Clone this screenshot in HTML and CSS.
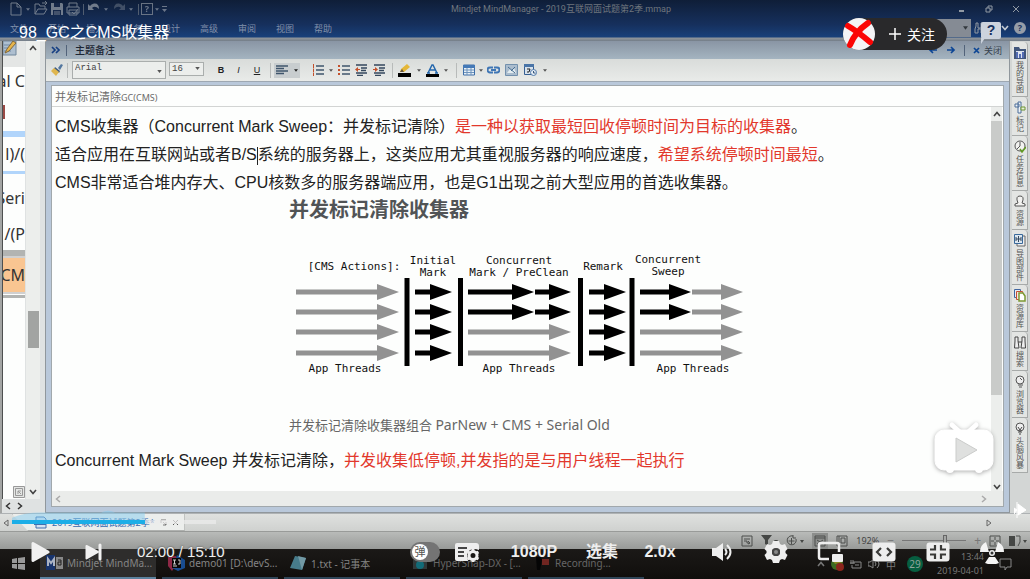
FILE: index.html
```html
<!DOCTYPE html>
<html lang="zh-CN">
<head>
<meta charset="utf-8">
<title>98_GC之CMS收集器</title>
<link rel="stylesheet" href="styles.css">
</head>
<body>
<svg class="defs" aria-hidden="true">
  <defs>
    <symbol id="caret" viewBox="0 0 6 4"><path d="M0 0h6L3 4z" fill="currentColor"/></symbol>
    <symbol id="up" viewBox="0 0 8 6"><path d="M1 5l3-3.500 3 3.500" fill="none" stroke="currentColor" stroke-width="1.600"/></symbol>
    <symbol id="down" viewBox="0 0 8 6"><path d="M1 1l3 3.500L7 1" fill="none" stroke="currentColor" stroke-width="1.600"/></symbol>
    <symbol id="left" viewBox="0 0 6 8"><path d="M5 1L1.500 4 5 7" fill="none" stroke="currentColor" stroke-width="1.500"/></symbol>
    <symbol id="right" viewBox="0 0 6 8"><path d="M1 1l3.500 3L1 7" fill="none" stroke="currentColor" stroke-width="1.500"/></symbol>
  </defs>
</svg>
<div class="player">
  <div class="desktop">
    <header class="app-head">
      <div class="title-row">
        <div class="quick">
          <svg width="16" height="16" viewBox="0 0 16 16"><path d="M3 2h6l4 4v8H3zM9 2v4h4" class="ln"/></svg>
          <svg class="cr" width="4" height="3"><use href="#caret"/></svg>
          <svg width="16" height="16" viewBox="0 0 16 16"><path d="M2 13V3h4l1 2h5v3M2 13l3-5h9l-3 5zM9 2h5M12 0l2 2-2 2" class="ln"/></svg>
          <svg width="16" height="16" viewBox="0 0 16 16"><path d="M2 2h11l1 1v11H2z" fill="#9199a3"/><path d="M5 2h6v4H5zM4 9h8v5H4z" fill="#18294a"/><path d="M5 11h6M5 13h6" class="ln"/></svg>
          <svg width="16" height="16" viewBox="0 0 16 16"><path d="M4 6V2h8v4M2 6h12v6H2zM4 9h8v5H4zM7 11l2 2 4-5" class="ln"/></svg>
          <i class="bar"></i>
          <svg width="16" height="16" viewBox="0 0 16 16"><path d="M2 3v6h6L6 7q3-3 7 1 0-6-5-5.500Q5 3 4 5z" fill="#9199a3"/></svg>
          <svg class="cr" width="4" height="3"><use href="#caret"/></svg>
          <svg class="dim" width="16" height="16" viewBox="0 0 16 16"><path d="M14 3v6H8l2-2q-3-3-7 1 0-6 5-5.500Q11 3 12 5z" fill="#9199a3"/></svg>
          <svg class="cr" width="4" height="3"><use href="#caret"/></svg>
          <i class="bar"></i>
          <span class="qbox">?</span>
          <svg class="cr" width="4" height="3"><use href="#caret"/></svg>
          <svg width="5" height="6" viewBox="0 0 5 6"><path d="M0 0h5v1H0zM0 3h5L2.500 6z" fill="currentColor"/></svg>
        </div>
        <div class="app-title">Mindjet MindManager - 2019互联网面试题第2季.mmap</div>
        <div class="win">
          <svg width="8" height="8" viewBox="0 0 8 8"><path d="M1 6h5" class="ln w2"/></svg>
          <svg width="8" height="8" viewBox="0 0 8 8"><path d="M1 3h4v4H1zM3 3V1h4v4H5" class="ln"/></svg>
          <svg width="8" height="8" viewBox="0 0 8 8"><path d="M1 1l6 6M7 1L1 7" class="ln"/></svg>
        </div>
      </div>
      <nav class="menu-row">
        <a href="#">文件</a><a href="#">开始</a><a href="#">插入</a><a href="#">任务</a><a href="#">设计</a><a href="#">高级</a><a href="#">审阅</a><a href="#">视图</a><a href="#">帮助</a>
        <span class="search"><svg width="5" height="4"><use href="#caret"/></svg></span>
        <svg class="find" width="11" height="12" viewBox="0 0 11 12"><path d="M2 1v3L1 7v4h3V7h3v4h3V7L9 4V1H7v5H4V1z" class="ln"/></svg>
        <svg class="mcar" width="8" height="6"><use href="#down"/></svg>
        <span class="help">?</span>
      </nav>
    </header>

    <main class="work">
      <aside class="map">
        <div class="canvas">
          <div class="m-icon"><svg width="14" height="15" viewBox="0 0 14 15"><path d="M0 0h13v14H0z" fill="#aebfd0" stroke="#71869c"/><path d="M1 4h9M1 7h8M1 10h7" stroke="#6e87a3"/><path d="M2 12L4 8l6-8 3 2-7 8z" fill="#e7b54a" stroke="#80673a"/></svg></div>
          <div class="m-text">al C</div>
          <div class="m-mark"></div>
          <div class="m-blue"></div>
          <div class="m-text tall">l)/(</div>
          <div class="m-thin"></div>
          <div class="m-text open">Seri</div>
          <div class="m-text low">/(P</div>
          <div class="m-grey"></div>
          <div class="m-hot">CM</div>
          <div class="m-edge"></div>
          <div class="m-foot"><svg width="12" height="12" viewBox="0 0 12 12"><path d="M.5.5h11v11H.5z" fill="#e4e6e4" stroke="#999"/><path d="M2.500 2.500h7v7h-7zM5 8V5h3M5 5l3 3" fill="none" stroke="#999"/></svg></div>
        </div>
        <div class="vbar">
          <svg width="8" height="6"><use href="#up"/></svg>
          <span class="thumb"></span>
          <svg width="8" height="6"><use href="#down"/></svg>
        </div>
        <div class="hbar"><svg width="6" height="8"><use href="#left"/></svg><svg width="6" height="8"><use href="#right"/></svg></div>
      </aside>

      <section class="notes">
        <div class="notes-head">
          <svg width="10" height="8" viewBox="0 0 10 8"><path d="M1 1l3 3-3 3M5 1l3 3-3 3" fill="none" stroke="#163f83" stroke-width="1.700"/></svg>
          <i class="bar"></i>
          <h2>主题备注</h2>
          <div class="nav">
            <svg width="10" height="8" viewBox="0 0 10 8"><path d="M9 4H2M5 1L2 4l3 3" fill="none" stroke="#0d4695" stroke-width="1.700"/></svg>
            <svg width="10" height="8" viewBox="0 0 10 8"><path d="M1 4h7M5 1l3 3-3 3" fill="none" stroke="#0d4695" stroke-width="1.700"/></svg>
            <i class="bar"></i>
            <button type="button" class="close"><svg width="7" height="7" viewBox="0 0 7 7"><path d="M1 1l5 5M6 1L1 6" stroke="#0d4695" stroke-width="1.700"/></svg>关闭</button>
          </div>
        </div>
        <div class="tools">
          <svg width="12" height="12" viewBox="0 0 12 12"><path d="M7 4l3-4 2 1-3 5z" fill="#53779f"/><path d="M4 3l5 4-1 2-5-4z" fill="#3f5c80"/><path d="M3 4l5 4-3 4-5-5z" fill="#dfb64f"/></svg>
          <i class="bar"></i>
          <label class="pick"><select aria-label="字体"><option>Arial</option></select><svg width="5" height="3"><use href="#caret"/></svg></label>
          <label class="pick small"><select aria-label="字号"><option>16</option></select><svg width="5" height="3"><use href="#caret"/></svg></label>
          <span></span>
          <button type="button"><b>B</b></button>
          <button type="button"><em>I</em></button>
          <button type="button"><u>U</u></button>
          <i class="bar"></i>
          <button type="button" class="on" aria-label="对齐"><svg width="12" height="10" viewBox="0 0 12 10"><path d="M0 1h12M0 3.500h8M0 6h12M0 8.500h8" stroke="#3f556c" stroke-width="1.300"/></svg><svg width="4" height="3"><use href="#caret"/></svg></button>
          <span></span>
          <svg width="12" height="12" viewBox="0 0 12 12"><path d="M4 2h8M4 6h8M4 10h8" stroke="#3f556c" stroke-width="1.500"/><path d="M1.500 0v4M1.500 4.500v3.500M1.500 8.500V12" stroke="#c3502b"/></svg>
          <svg class="cr" width="4" height="3"><use href="#caret"/></svg>
          <svg width="12" height="12" viewBox="0 0 12 12"><path d="M4 2h8M4 6h8M4 10h8" stroke="#3f556c" stroke-width="1.500"/><path d="M0 1h2v2H0zM0 5h2v2H0zM0 9h2v2H0z" fill="#c3502b"/></svg>
          <svg class="cr" width="12" height="12" viewBox="0 0 12 12"><path d="M1 1h11M6 4h6M6 6.500h5M1 9h11M2 11.500h6" stroke="#34475d" stroke-width="1.300"/><path d="M0 5.500L3 3v2h2v1H3v2z" fill="#c3502b"/></svg>
          <svg class="cr" width="12" height="12" viewBox="0 0 12 12"><path d="M1 1h11M6 4h6M6 6.500h5M1 9h11M2 11.500h6" stroke="#34475d" stroke-width="1.300"/><path d="M5 5.500L2 3v2H0v1h2v2z" fill="#c3502b"/></svg>
          <i class="bar"></i>
          <svg width="13" height="13" viewBox="0 0 13 13"><path d="M0 9h13v4H0z"/><path d="M2 8l1-3 6-5 3 3-6 5z" fill="#e5b738"/><path d="M2 8l2-3 2 3z" fill="#65553f"/></svg>
          <svg class="cr" width="4" height="3"><use href="#caret"/></svg>
          <svg width="13" height="13" viewBox="0 0 13 13"><path d="M0 10h13v3H0z"/><path d="M2 9l4-8h1l4 8M4 6h5M1 9h3M9 9h3" fill="none" stroke="#2467ad" stroke-width="1.500"/></svg>
          <svg class="cr" width="4" height="3"><use href="#caret"/></svg>
          <i class="bar"></i>
          <svg width="12" height="12" viewBox="0 0 12 12"><path d="M.5 1h11v10H.5z" fill="#e8f0f6" stroke="#3e6fa9"/><path d="M0 1h12v3H0z" fill="#4479b7"/><path d="M1 6h10M1 8.500h10M4 4v7M8 4v7" stroke="#6f94bd"/></svg>
          <svg class="cr" width="4" height="3"><use href="#caret"/></svg>
          <svg class="cr" width="13" height="8" viewBox="0 0 13 8"><path d="M6 1.500H3a2.500 2.500 0 000 5h3M7 1.500h3a2.500 2.500 0 010 5H7M4 4h5" fill="none" stroke="#3f76b5" stroke-width="2"/></svg>
          <svg class="cr" width="13" height="12" viewBox="0 0 13 12"><path d="M.5.5h12v11H.5z" fill="#aabccd" stroke="#7290ad"/><path d="M2 9l3-4 2 2 2-3 2 5z" fill="#e4edf1"/><path d="M3 3l7 6M10 3L6 7" stroke="#476d91"/></svg>
          <svg class="cr" width="13" height="12" viewBox="0 0 13 12"><path d="M.5.5h9v10h-9z" fill="#d7e2ec" stroke="#365f92"/><path d="M0 0h10v3H0z" fill="#4a75a7"/><path d="M3 5h3L5 8H3" fill="none" stroke="#222"/><circle cx="9.500" cy="8.500" r="3" fill="#e5edf5" stroke="#527bac"/><path d="M9.500 7v2h2" fill="none" stroke="#36567a"/></svg>
          <svg class="cr" width="4" height="3"><use href="#caret"/></svg>
        </div>
        <div class="doc">
          <div class="doc-title">并发标记清除<span>GC(CMS)</span></div>
          <div class="doc-main">
            <article class="doc-text">
              <p>CMS收集器（Concurrent Mark Sweep：并发标记清除）<em>是一种以获取最短回收停顿时间为目标的收集器</em>。</p>
              <p>适合应用在互联网站或者B/S<span class="text-caret"></span>系统的服务器上，这类应用尤其重视服务器的响应速度，<em>希望系统停顿时间最短</em>。</p>
              <p>CMS非常适合堆内存大、CPU核数多的服务器端应用，也是G1出现之前大型应用的首选收集器。</p>
              <figure>
                <h3>并发标记清除收集器</h3>
                <svg class="diagram" width="460" height="130" viewBox="289 250 460 130">
                  <defs>
                    <marker id="hk" markerUnits="userSpaceOnUse" markerWidth="22" markerHeight="16" refX="0" refY="8" orient="auto"><path d="M0 0l22 8-22 8z"/></marker>
                    <marker id="hg" markerUnits="userSpaceOnUse" markerWidth="22" markerHeight="16" refX="0" refY="8" orient="auto"><path d="M0 0l22 8-22 8z" fill="#929292"/></marker>
                  </defs>
                  <g class="thread grey">
                    <path d="M296 292H377"/><path d="M296 312H377"/><path d="M296 332H377"/><path d="M296 353H377"/>
                    <path d="M468 332H549"/><path d="M468 353H549"/>
                    <path d="M692 292H721"/><path d="M692 312H721"/><path d="M640 332H721"/><path d="M640 353H721"/>
                  </g>
                  <g class="thread">
                    <path d="M415 292H430"/><path d="M415 312H430"/><path d="M415 332H430"/><path d="M415 353H430"/>
                    <path d="M468 292H512"/><path d="M468 312H512"/><path d="M535 292H549"/><path d="M535 312H549"/>
                    <path d="M589 292H604"/><path d="M589 312H604"/><path d="M589 332H604"/><path d="M589 353H604"/>
                    <path d="M640 292H669"/><path d="M640 312H669"/>
                  </g>
                  <path d="M404.500 278h5v88h-5zM458 278h5v88h-5zM578 278h5v88h-5zM629.500 278h5v88h-5z"/>
                  <g class="lab">
                    <text x="354" y="270">[CMS Actions]:</text>
                    <text x="433" y="264">Initial</text><text x="433" y="276">Mark</text>
                    <text x="519" y="264">Concurrent</text><text x="519" y="276">Mark / PreClean</text>
                    <text x="603" y="270">Remark</text>
                    <text x="668" y="263">Concurrent</text><text x="668" y="275">Sweep</text>
                    <text x="345" y="372">App Threads</text><text x="519" y="372">App Threads</text><text x="693" y="372">App Threads</text>
                  </g>
                </svg>
                <figcaption>并发标记清除收集器组合 <span>ParNew + CMS + Serial Old</span></figcaption>
              </figure>
              <p>Concurrent Mark Sweep 并发标记清除，<em>并发收集低停顿,并发指的是与用户线程一起执行</em></p>
            </article>
            <div class="doc-scroll">
              <svg width="8" height="6"><use href="#up"/></svg>
              <span class="thumb"></span>
              <svg width="8" height="6"><use href="#down"/></svg>
            </div>
          </div>
          <div class="doc-hscroll"><svg width="6" height="8"><use href="#left"/></svg><svg width="6" height="8"><use href="#right"/></svg></div>
        </div>
      </section>

      <aside class="side">
        <button type="button"><svg width="12" height="13" viewBox="0 0 12 13"><path d="M0 1h5l1 2h6v10H0z" fill="#41567c"/><path d="M2 5h8v7H2z" fill="#dce3ee"/><path d="M3 6v6M6 8v4M9 6v6" stroke="#2746a0" stroke-width="1.500"/></svg>我的导图</button>
        <button type="button"><svg width="12" height="13" viewBox="0 0 12 13"><path d="M4 1h3v11H4zM1 3h4v3H1z" fill="#eef3f7" stroke="#4a6d99"/><path d="M7 6h4v3H7z" fill="#e7f0d6" stroke="#6c9434"/></svg>标记</button>
        <button type="button"><svg width="12" height="13" viewBox="0 0 12 13"><circle cx="6" cy="6" r="5" fill="#f2f2f0" stroke="#555"/><path d="M6 2v4L3 9" fill="none" stroke="#555"/><path d="M6 9l2 3 4-5" fill="none" stroke="#619c21" stroke-width="1.500"/></svg>任务信息</button>
        <button type="button"><svg width="12" height="13" viewBox="0 0 12 13"><path d="M4 8Q1 1 6 1t2 7l3 1v2H1V9z" fill="#f2f2f0" stroke="#555"/></svg>资源</button>
        <button type="button"><svg width="12" height="13" viewBox="0 0 12 13"><path d="M3 2h8v10H3z" fill="#eee" stroke="#666"/><path d="M.5.5h8v9h-8z" fill="#dce7f0" stroke="#39699a"/><path d="M2 5h5M4.500 2v6M2 3v4M7 3v4" stroke="#34495e"/></svg>导图部件</button>
        <button type="button"><svg width="12" height="13" viewBox="0 0 12 13"><path d="M.5.5h6v8h-6z" fill="#e8edf5" stroke="#4066a0"/><path d="M2.500 2.500h6v8h-6z" fill="#f7e5df" stroke="#c35034"/><path d="M5 4h4l2 3v5H5z" fill="#fff" stroke="#7c9933" stroke-width="1.500"/></svg>资源库</button>
        <button type="button"><svg width="12" height="13" viewBox="0 0 12 13"><path d="M1 1h3v4l1 7H.5L1 5zM8 1h3v4l.5 7H7l1-7zM4 6h4" fill="#eee" stroke="#444"/></svg>搜索</button>
        <button type="button"><svg width="12" height="13" viewBox="0 0 12 13"><circle cx="6" cy="5" r="4" fill="#eee" stroke="#555"/><path d="M4 10h5M5 12h3M6 3l2 2" stroke="#555"/></svg>浏览器</button>
        <button type="button"><svg width="12" height="13" viewBox="0 0 12 13"><circle cx="6" cy="5" r="4" fill="#eee" stroke="#555"/><path d="M4 10h4M5 12h2M4 5l2 3 2-3M6 8v2" fill="none" stroke="#444"/></svg>头脑风暴</button>
      </aside>
    </main>

    <div class="doc-tabs">
      <svg class="tri" width="6" height="8" viewBox="0 0 6 8"><path d="M5 1v6L1 4z" fill="none" stroke="#666"/></svg>
      <div class="doc-tab">
        <svg width="13" height="13" viewBox="0 0 13 13"><path d="M2 1h8l2 2v9H2z" fill="#d5e2f0" stroke="#416fae"/><path d="M0 4h12v5H0z" fill="#416fae"/><path d="M2 8V5l2 2 2-2v3M8 5v3M10 5v3" fill="none" stroke="#fff"/></svg>
        <span>2019互联网面试题第2季*</span>
        <svg width="7" height="7" viewBox="0 0 7 7"><path d="M1 4V1h5M3 3l3 3M6 3v3H3" fill="none" stroke="#777"/></svg>
        <svg width="7" height="7" viewBox="0 0 7 7"><path d="M1 1l5 5M6 1L1 6" stroke="#555"/></svg>
      </div>
      <svg class="tri end" width="6" height="8" viewBox="0 0 6 8"><path d="M1 1v6l4-3z" fill="none" stroke="#666"/></svg>
    </div>
    <div class="status">
      <svg width="12" height="12" viewBox="0 0 12 12"><path d="M1 1h10v10H1zM3 4h6M3 6h3v2h3M7 9l2-1-2-2" class="dk"/></svg>
      <svg width="17" height="12" viewBox="0 0 17 12"><path d="M0 0h11L7 5v6L4 9V5zM13 5h4l-2 3z" fill="#454745"/></svg>
      <svg width="18" height="12" viewBox="0 0 18 12"><path d="M10 4a4.500 4.500 0 11-3-3M5.500 3v6M2.500 6h6M7 0v3h3" class="dk"/><path d="M14 5h4l-2 3z" fill="#454745"/></svg>
      <span class="st-on"><svg width="12" height="12" viewBox="0 0 12 12"><path d="M1 1h10v10H1zM1 3h10M3 5l6 4M9 5L3 9" class="dk"/></svg></span>
      <svg width="12" height="12" viewBox="0 0 12 12"><path d="M1 1h10v10H1zM3 1v10M5 3h4v5H5z" class="dk"/></svg>
      <span class="pct">192%</span>
      <span class="sign">−</span>
      <input class="zoom" type="range" min="0" max="100" value="68" aria-label="缩放">
      <span class="sign">+</span>
      <svg width="12" height="12" viewBox="0 0 12 12"><path d="M1 1h10v10H1zM6 2v3M6 7v3M2 6h3M7 6h3" class="dk"/></svg>
      <svg width="18" height="12" viewBox="0 0 18 12"><path d="M0 1h6v10H0z" fill="#454745"/><path d="M7 1h4v6l-2 4" class="dk"/><path d="M14 5h4l-2 3z" fill="#454745"/></svg>
    </div>

    <footer class="taskbar">
      <svg class="start" width="14" height="14" viewBox="0 0 14 14"><path d="M0 2l5-1v5H0zM6 1l7-1v6H6zM0 7h5v5l-5-1zM6 7h7v6l-7-1z" fill="#999"/></svg>
      <div class="task on"><svg width="17" height="16" viewBox="0 0 17 16"><path d="M0 0h9v15H0z" fill="#18346c"/><path d="M2 11V4l3 4 3-4v7" fill="none" stroke="#aab3c4" stroke-width="2"/><path d="M10 2h7v12h-7z" fill="#888"/><path d="M12 5h3v2h-3v3h3V7" fill="none" stroke="#222"/></svg>Mindjet MindMa...</div>
      <div class="task"><svg width="17" height="16" viewBox="0 0 17 16"><path d="M0 2l8-1 2 6-6 9-4-5z" fill="#8e2846"/><path d="M9 0l8 5v8l-7 3-6-3z" fill="#184c91"/><path d="M4 3h9v10H4z" fill="#080808"/><path d="M5 5h3M6.500 5v4M5 9h3M10 5h2v4h-2M5 11h4" fill="none" stroke="#ccc"/></svg>demo01 [D:\devS...</div>
      <div class="task"><svg width="17" height="16" viewBox="0 0 17 16"><path d="M5 1l11 2-4 12L0 13z" fill="#477c8b"/><path d="M8 1l8 2-4 12z" fill="#7299a4"/></svg>1.txt - 记事本</div>
      <div class="task dimmed"><svg width="17" height="16" viewBox="0 0 17 16"><path d="M1 5h3l2-2h5l2 2h2v9H1z" fill="#30393a"/><circle cx="8" cy="10" r="4" fill="#126b78"/></svg>HyperSnap-DX - [...</div>
      <div class="task dimmed"><svg width="17" height="16" viewBox="0 0 17 16"><path d="M2 2h5l1 3-2 10H3z" fill="#050505"/><path d="M8 4h7v6H8z" fill="#712621"/></svg>Recording...</div>
      <div class="tray">
        <svg width="8" height="6"><use href="#up"/></svg>
        <svg width="13" height="13" viewBox="0 0 13 13"><circle cx="6" cy="6" r="6" fill="#3c6b22"/><path d="M1 2l8-2 3 4-8 2z" fill="#888622"/><circle cx="9" cy="9" r="4" fill="#8b251c"/></svg>
        <svg width="12" height="9" viewBox="0 0 12 9"><path d="M3 2h8v6H2V5M1 0v4M3 0v4M0 3h5M6 4v2M8 4v2" class="ty"/></svg>
        <svg width="12" height="10" viewBox="0 0 12 10"><path d="M0 3h2l3-2v8L2 7H0zM7 3q2 2 0 4M9 1q4 4 0 8" class="ty"/></svg>
        <span>中</span>
        <span class="temp">29</span>
        <time>13:44<br>2019-04-01</time>
        <svg width="13" height="13" viewBox="0 0 13 13"><path d="M1 1h11v8H8L6 12V9H1z" class="ty"/></svg>
      </div>
    </footer>
  </div>

  <h1 class="video-title">98_GC之CMS收集器</h1>
  <div class="follow">
    <svg width="32" height="32" viewBox="0 0 32 32"><circle cx="16" cy="16" r="16" fill="#f4f4f6"/><path d="M5 8q9 5 22 16M25 5Q12 14 7 27" fill="none" stroke="#fb0505" stroke-width="6" stroke-linecap="round"/></svg>
    <button type="button"><svg width="12" height="12" viewBox="0 0 12 12"><path d="M6 0v12M0 6h12" stroke="#fff" stroke-width="1.500"/></svg>关注</button>
  </div>
  <span class="ask">?</span>
  <svg class="tv" width="68" height="62" viewBox="0 0 68 62"><g fill="#fff" stroke="#fff"><path d="M22 5l10 9M46 5L36 14" stroke-width="5" stroke-linecap="round"/><rect x="5" y="10" width="58" height="40" rx="9"/><path d="M17 49a3 3 0 006 0M46 49a3 3 0 006 0" stroke-width="2"/></g><path d="M26 18v24l21-12z" fill="#dfe0df" stroke="#cbcccb"/></svg>
  <svg class="spark" width="12" height="16" viewBox="0 0 12 16"><path d="M3 0v16M4 2l8 6-8 5zM0 6l3 2-3 4" fill="#fff" stroke="#fff"/></svg>

  <div class="progress">
    <svg class="heat" viewBox="0 0 134 14" preserveAspectRatio="none"><path d="M0 14V9Q12 3 30 3H90Q97-1 104 3H134v11z" fill="#82c9ed" fill-opacity=".5"/></svg>
    <div class="rail"><div class="buffered"></div><div class="played"></div></div>
  </div>
  <div class="controls">
    <div class="c-left">
      <button type="button" aria-label="播放"><svg width="19" height="22" viewBox="0 0 19 22"><path d="M2 2.500v17L17 11z" fill="#f1f1f1" stroke="#f1f1f1" stroke-width="3" stroke-linejoin="round"/></svg></button>
      <button type="button" aria-label="下一个"><svg width="17" height="18" viewBox="0 0 17 18"><path d="M1.500 3v12.500L13 9z" fill="#f1f1f1" stroke="#f1f1f1" stroke-width="2" stroke-linejoin="round"/><path d="M15 2v14" stroke="#f1f1f1" stroke-width="3" stroke-linecap="round"/></svg></button>
      <span class="time">02:00 / 15:10</span>
    </div>
    <div class="c-right">
      <label class="danmaku"><input type="checkbox" aria-label="弹幕"><span>弹</span></label>
      <button type="button" aria-label="弹幕设置"><svg width="26" height="20" viewBox="0 0 26 20"><path d="M3 1h19q3 0 3 3v4q-9-3-12 4l1 7H3q-2 0-2-2V3q0-2 2-2z" fill="#eee"/><path d="M4 6h9M4 10h6M4 14h6" stroke="#454545" stroke-width="2"/><circle cx="19" cy="13.500" r="4" fill="none" stroke="#eee" stroke-width="3"/><path d="M19 7v2M19 18v2M13.500 10l2 1M22.500 16l2 1M13.500 17l2-1M22.500 11l2-1" stroke="#eee" stroke-width="3"/></svg></button>
      <button type="button">1080P</button>
      <button type="button">选集</button>
      <button type="button">2.0x</button>
      <button type="button" aria-label="音量"><svg width="22" height="20" viewBox="0 0 22 20"><path d="M1 6h4l7-5v18l-7-5H1z" fill="#eee"/><path d="M14 7q3 3 0 6M16 3q7 7 0 14" fill="none" stroke="#eee" stroke-width="2"/></svg></button>
      <button type="button" aria-label="设置"><svg width="24" height="24" viewBox="0 0 24 24"><path fill-rule="evenodd" d="M9 1h6l1 3 2 1 3-1 2.500 5-2 2v2l2 2-2.500 5-3-1-2 1-1 3H9l-1-3-2-1-3 1-2.500-5 2-2v-2l-2-2L3 4l3 1 2-1zM12 8a4 4 0 100 8 4 4 0 000-8z" fill="#eee"/><circle cx="12" cy="12" r="4" fill="#444"/><circle cx="12" cy="12" r="2" fill="#888"/></svg></button>
      <button type="button" aria-label="画中画"><svg width="26" height="22" viewBox="0 0 26 22"><path d="M12 18H4q-2 0-2-2V4q0-2 2-2h16q2 0 2 2v7" fill="none" stroke="#eee" stroke-width="2.500"/><rect x="15" y="13" width="11" height="8" rx="1" fill="#eee"/></svg></button>
      <button type="button" aria-label="宽屏"><svg width="24" height="20" viewBox="0 0 24 20"><rect width="23" height="19" x=".5" y=".5" rx="3" fill="#eee"/><path d="M9 6l-4 4 4 4M15 6l4 4-4 4" fill="none" stroke="#3a3a38" stroke-width="2.200"/></svg></button>
      <button type="button" aria-label="退出全屏"><svg width="24" height="20" viewBox="0 0 24 20"><rect width="23" height="19" x=".5" y=".5" rx="3" fill="#eee"/><path d="M9 3v4.500H4M15 3v4.500H20M9 17v-4.500H4M15 17v-4.500H20" fill="none" stroke="#3a3a38" stroke-width="2.200"/></svg></button>
      <button type="button" aria-label="辐射"><svg width="24" height="24" viewBox="0 0 24 24"><path d="M9 12H0q0-7 6-10zM15 12h9q0-7-6-10zM9 17h6l4 6q-7 3-14 0z" fill="#f4f4f4"/><circle cx="12" cy="13" r="3" fill="#eee"/><circle cx="12" cy="13" r="1.500" fill="#333"/></svg></button>
    </div>
  </div>
</div>
</body>
</html>
```

FILE: styles.css
```css
* { box-sizing: border-box; }
body { margin: 0; font-family: "Noto Sans", "Noto Sans CJK SC", sans-serif; }
svg { display: block; flex: none; }
button { margin: 0; padding: 0; border: 0; background: none; font: inherit; color: inherit; display: flex; align-items: center; justify-content: center; white-space: nowrap; }
.defs { position: absolute; width: 0; height: 0; }
.ln { fill: none; stroke: #9199a3; stroke-width: 1; }
.w2 { stroke-width: 2; }
.dk { fill: none; stroke: #4c4e4c; }
.ty { fill: none; stroke: #888; }
.bar { flex: none; width: 1px; }

.player { position: relative; overflow: hidden; }
.desktop { display: flex; flex-direction: column; min-height: 100vh; background: #d5d7d5; }

/* application window */
.app-head { flex: none; height: 41px; background: linear-gradient(#0f1e38, #16305d 60%, #18407a 37px, #8f959b 38px, #737d88); color: #8992a0; }
.title-row { display: grid; grid-template-columns: 1fr auto 1fr; height: 18px; }
.quick { display: flex; align-items: center; padding-left: 8px; opacity: .75; }
.quick .cr { margin: 0 3px 0 2px; }
.quick .bar { height: 11px; margin: 0 2px; background: #66707e; }
.dim { opacity: .5; }
.qbox { width: 12px; height: 12px; border: 1px solid #858d98; font-size: 9px; line-height: 10px; text-align: center; font-weight: bold; }
.app-title { margin-left: 92px; font: 9px/18px Roboto, "Noto Sans CJK SC", sans-serif; color: #6f757d; }
.win { display: flex; justify-content: flex-end; align-items: center; gap: 19px; padding-right: 10px; }
.menu-row { display: flex; align-items: center; height: 20px; font-size: 9px; }
.menu-row a { width: 38px; text-align: center; color: #8190aa; text-decoration: none; }
.search { width: 90px; height: 18px; margin-left: auto; padding-right: 3px; display: flex; align-items: center; justify-content: flex-end; background: #858b94; color: #33383e; }
.find { margin: 0 16px 0 3px; }
.mcar { color: #c4cad3; margin-right: 5px; }
.help { width: 12px; height: 12px; margin-right: 4px; border-radius: 50%; background: #969da8; color: #193461; font-size: 9px; font-weight: bold; line-height: 12px; text-align: center; }

.work { flex: 1; display: grid; grid-template-columns: 45px minmax(0, 1fr) 20px; }
.map { display: grid; grid-template-columns: 26px 12px; grid-template-rows: 1fr 14px; background: #dfe2e2; border-left: 2px solid #a3a5a4; }
.canvas { display: flex; flex-direction: column; overflow: hidden; background: #fdfefd; border-left: 1px solid #4e5050; margin-right: 3px; }
.m-icon { height: 26px; background: #e4e6e5; }
.m-text { display: flex; justify-content: flex-end; height: 32px; font-size: 16px; line-height: 28px; color: #333; white-space: pre; }
.m-mark { height: 14px; margin: 6px 0 12px; border-left: 2px solid #9a4a45; }
.m-blue { height: 6px; background: #b1d5fb; }
.m-text.tall { height: 34px; line-height: 34px; }
.m-thin { height: 3px; background: #b1d5fb; }
.m-text.open { height: 44px; line-height: 48px; }
.m-text.low { height: 32px; line-height: 32px; }
.m-grey { height: 6px; background: #b2b4b2; }
.m-hot { display: flex; justify-content: flex-end; height: 38px; border: solid #d0d0d0; border-width: 2px 0; background: #f9c591; color: #333; font-size: 16px; line-height: 34px; }
.m-edge { height: 3px; margin-top: 1px; background: #b2b4b2; }
.m-foot { display: flex; justify-content: flex-end; margin-top: auto; padding-bottom: 1px; }
.vbar, .doc-scroll { display: flex; flex-direction: column; align-items: center; background: #eceeec; color: #444; }
.vbar { margin-left: -2px; padding: 4px 0; }
.vbar .thumb { width: 11px; height: 37px; margin: 260px 0 auto; background: #a2a4a2; }
.hbar { display: flex; align-items: center; gap: 6px; padding-left: 3px; color: #333; }

.notes { display: flex; flex-direction: column; min-width: 0; background: #b9c8da; border: 1px solid #90979c; border-top: 0; }
.notes-head { display: flex; align-items: center; height: 18px; padding: 0 7px 0 5px; background: linear-gradient(#8995a4, #a4b4c0); }
.notes-head .bar { height: 11px; margin: 0 8px 0 5px; background: #52637a; }
.notes-head h2 { margin: 0; font-size: 10px; line-height: 18px; font-weight: 500; color: #1c2634; }
.nav { display: flex; align-items: center; gap: 8px; margin-left: auto; }
.notes-head .nav .bar { margin: 0; }
.close { gap: 4px; font-size: 9px; color: #37434f; }
.tools { display: grid; grid-template-columns: 12px 3px 94px 35px 3px 16px 13px 18px 2px 26px 6px 12px 8px 12px 15px 15px 6px 13px 9px 13px 8px 7px 12px 5px 14px 16px 16px 8px; column-gap: 3px; align-items: center; height: 23px; padding: 0 5px; border-bottom: 1px solid #9ea8b2; background: linear-gradient(#d9dcda, #e9ebe9); color: #555; font-size: 9px; }
.tools .bar { justify-self: center; height: 15px; background: #b8bbba; }
.tools button { height: 15px; color: #222; font-family: "Liberation Sans", sans-serif; }
.tools .cr { justify-self: center; }
.tools .on { gap: 6px; background: #c8cdcf; }
.pick { position: relative; display: block; height: 18px; border: 1px solid #aaaead; background: #eceeec; }
.pick.small { height: 14px; margin-bottom: 2px; }
.pick select { width: 100%; height: 12px; padding: 0 2px; border: 0; background: none; appearance: none; display: block; color: #444; font: 9px/12px "Liberation Mono", monospace; }
.pick svg { position: absolute; right: 3px; bottom: 5px; }

.doc { flex: 1; display: flex; flex-direction: column; margin: 3px 5px 5px; border: 1px solid #a1a8ac; background: #fdfefd; }
.doc-title { height: 21px; padding-left: 3px; border-bottom: 1px solid #d2d4d3; color: #6b6b6b; font-size: 11px; line-height: 21px; }
.doc-title span { font-size: 9px; }
.doc-main { flex: 1; display: flex; }
.doc-text { flex: 1; min-width: 0; padding: 6px 3px 0; color: #222; font: 16px/28px "Liberation Sans", "Noto Sans CJK SC", sans-serif; }
.doc-text p { margin: 0; }
.doc-text em { font-style: normal; color: #e2382c; }
.text-caret { display: inline-block; width: 1px; height: 18px; vertical-align: middle; background: #222; }
.doc-text figure { margin: 0 0 11px 234px; color: #515456; }
.doc-text h3 { margin: 0 0 27px; font-size: 20px; line-height: 26px; }
.diagram { color: #000; overflow: visible; }
.thread path { stroke: #000; stroke-width: 5; marker-end: url(#hk); }
.thread.grey path { stroke: #929292; marker-end: url(#hg); }
.lab { font: 11px "DejaVu Sans Mono", monospace; text-anchor: middle; fill: #111; }
.doc-text figcaption { margin-top: 34px; font: 13px/22px "Noto Sans", "Noto Sans CJK SC", sans-serif; color: #666; }
.doc-text figcaption span { font-size: 14px; }
.doc-scroll { width: 11px; margin-right: 1px; padding: 4px 0 1px; }
.doc-scroll .thumb { width: 11px; height: 274px; margin: 4px 0 auto; background: #c9cbc9; }
.doc-hscroll { display: flex; align-items: center; justify-content: space-between; height: 15px; padding: 0 16px 0 3px; background: #eaecea; color: #aaa; }

.side { padding: 1px 2px 0; background: #d3d6d5; }
.side button { writing-mode: vertical-rl; width: 16px; padding: 4px 0 3px; gap: 2px; border: 1px solid #a7aaa9; border-left: 0; border-top: 0; border-top-right-radius: 4px; background: #e3e5e3; color: #555; font-size: 8px; line-height: 14px; }

.doc-tabs { flex: none; display: flex; align-items: center; height: 18px; background: linear-gradient(#dfe1df, #cfd1cf); border-top: 1px solid #aeb2b4; }
.tri { margin-left: 3px; }
.tri.end { margin: 0 38px 0 auto; }
.doc-tab { display: flex; align-items: center; gap: 5px; height: 17px; margin-left: 3px; padding: 0 5px 0 21px; background: #eceeec; border: 1px solid #b0b2b0; border-top: 0; clip-path: polygon(0 0, 100% 0, 100% 100%, 16px 100%); font-size: 9px; color: #356aae; }
.status { flex: none; display: flex; align-items: center; justify-content: flex-end; gap: 8px; height: 18px; padding-right: 3px; background: linear-gradient(#b9bbb9, #989a98); border-top: 1px solid #999b99; color: #444; font-size: 9px; }
.status svg, .st-on { flex: none; }
.st-on { padding: 2px 2px; background: #8c8e8c; }
.sign { font-size: 12px; color: #777; }
.zoom { appearance: none; width: 64px; height: 14px; margin: 0; background: linear-gradient(#777, #777) center / 100% 1px no-repeat; }
.zoom::-webkit-slider-thumb { appearance: none; width: 4px; height: 12px; border: 1px solid #666; background: #a5a7a5; }

.taskbar { flex: none; display: flex; gap: 6px; height: 30px; background: linear-gradient(#1b1917, #100e0c); color: #858585; font-size: 10px; }
.start { margin: 8px 8px 0 12px; }
.task { width: 116px; min-width: 0; display: flex; align-items: center; gap: 4px; padding-left: 6px; border-bottom: 2px solid #304659; white-space: nowrap; }
.task.on { background: #2e2d2c; border-color: #5c829e; }
.task.dimmed { color: #666; }
.tray { display: flex; align-items: center; gap: 6px; margin-left: auto; padding-right: 18px; color: #777; }
.tray time { margin-left: 3px; text-align: right; font-size: 9px; line-height: 14px; }
.tray time + svg { margin-left: 9px; }
.temp { width: 16px; height: 16px; border-radius: 50%; background: #075e40; color: #91a49d; line-height: 16px; text-align: center; margin: 0 5px; }

/* player overlay */
.video-title { position: absolute; left: 19px; top: 22px; margin: 0; color: #fff; font: 16px/22px "Liberation Sans", "Noto Sans CJK SC", sans-serif; }
.follow { position: absolute; right: 83px; top: 18px; display: flex; align-items: center; height: 32px; padding-right: 12px; gap: 14px; border-radius: 16px; background: #29292b; color: #fff; font-size: 14px; }
.follow button { gap: 6px; }
.ask { position: absolute; right: 29px; top: 22px; width: 20px; height: 17px; border-radius: 2px; background: #ccd3dd; color: #17315d; font: bold 14px/17px "Liberation Sans", sans-serif; text-align: center; }
.ask::after { content: ""; position: absolute; left: 0; top: 16px; border: solid transparent; border-width: 3px 2px; border-top-color: #ccd3dd; border-left-color: #ccd3dd; }
.tv { position: absolute; right: 32px; bottom: 97px; filter: drop-shadow(0 1px 2px #aaa); }
.spark { position: absolute; right: 4px; bottom: 61px; }
.progress { position: absolute; left: 12px; right: 12px; bottom: 55px; }
.heat { width: 13.2%; height: 12px; margin-bottom: -2px; }
.rail { display: grid; height: 4px; }
.rail div { grid-area: 1 / 1; }
.buffered { width: 20.3%; background: #ececec; opacity: .7; }
.played { position: relative; width: 13.2%; background: #1caee7; }
.controls { position: absolute; left: 0; right: 0; bottom: 15px; display: flex; justify-content: space-between; height: 24px; padding: 0 11px 0 31px; color: #eee; }
.c-left { display: flex; align-items: center; gap: 35px; }
.time { font: 15px/24px "Liberation Sans", sans-serif; text-shadow: 0 0 2px #333; }
.c-right { display: grid; grid-template-columns: 40px 44px 90px 46px 70px repeat(6, 54px); align-items: center; justify-items: center; font: bold 16px/24px "Liberation Sans", "Noto Sans CJK SC", sans-serif; }
.danmaku { display: flex; align-items: center; width: 30px; height: 20px; padding: 0 2px; border-radius: 10px; background: #747474; }
.danmaku input { position: absolute; opacity: 0; width: 16px; height: 16px; margin: 0; }
.danmaku span { width: 16px; height: 16px; border-radius: 50%; background: #fff; color: #555; font-size: 11px; line-height: 16px; text-align: center; font-weight: normal; }
```
